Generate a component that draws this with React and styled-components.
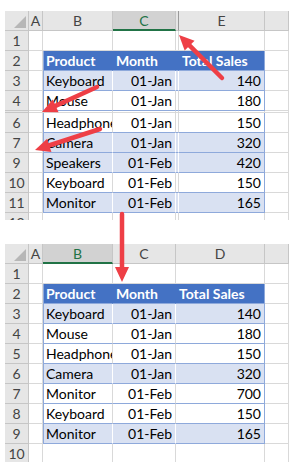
import React from 'react'
import styled, { createGlobalStyle } from 'styled-components'

// palette
const colors = {
	grid: '#d9d9d9',
	headerBg: '#e6e6e6',
	headerLine: '#c6c6c6',
	headerText: '#444444',
	selectedBg: '#d2d2d2',
	excelGreen: '#217346',
	tableHead: '#4472c4',
	tableBand: '#d9e1f2',
	tableLine: '#8ea9db',
	arrow: '#ee3f46',
}

const tones = {
	head: colors.tableHead,
	band: colors.tableBand,
	plain: '#ffffff',
}

// sheet data
const topSheet = {
	template: '24px 14px 70px 63px 3px 86px 1fr',
	height: 209,
	columns: [
		{ label: 'A' },
		{ label: 'B' },
		{ label: 'C', selected: true, align: 'right' },
		{ hidden: true },
		{ label: 'E', align: 'right' },
		{ label: '' },
	],
	table: [1, 4],
	rows: [
		{ n: '1' },
		{ n: '2', tone: 'head', cells: [null, 'Product', 'Month', null, 'Total Sales'] },
		{ n: '3', tone: 'band', cells: [null, 'Keyboard', '01-Jan', null, '140'] },
		{ n: '4', tone: 'plain', cells: [null, 'Mouse', '01-Jan', null, '180'] },
		{ hidden: true },
		{ n: '6', tone: 'plain', cells: [null, 'Headphones', '01-Jan', null, '150'] },
		{ n: '7', tone: 'band', cells: [null, 'Camera', '01-Jan', null, '320'] },
		{ n: '9', tone: 'band', cells: [null, 'Speakers', '01-Feb', null, '420'] },
		{ n: '10', tone: 'plain', cells: [null, 'Keyboard', '01-Feb', null, '150'] },
		{ n: '11', tone: 'band', cells: [null, 'Monitor', '01-Feb', null, '165'] },
		{ n: '12' },
	],
}

const bottomSheet = {
	template: '24px 14px 70px 63px 89px 1fr',
	height: 240,
	columns: [
		{ label: 'A' },
		{ label: 'B', selected: true },
		{ label: 'C', align: 'right' },
		{ label: 'D', align: 'right' },
		{ label: '' },
	],
	table: [1, 3],
	rows: [
		{ n: '1' },
		{ n: '2', tone: 'head', cells: [null, 'Product', 'Month', 'Total Sales'] },
		{ n: '3', tone: 'band', cells: [null, 'Keyboard', '01-Jan', '140'] },
		{ n: '4', tone: 'plain', cells: [null, 'Mouse', '01-Jan', '180'] },
		{ n: '5', tone: 'plain', cells: [null, 'Headphones', '01-Jan', '150'] },
		{ n: '6', tone: 'band', cells: [null, 'Camera', '01-Jan', '320'] },
		{ n: '7', tone: 'plain', cells: [null, 'Monitor', '01-Feb', '700'] },
		{ n: '8', tone: 'plain', cells: [null, 'Keyboard', '01-Feb', '150'] },
		{ n: '9', tone: 'band', cells: [null, 'Monitor', '01-Feb', '165'] },
		{ n: '10' },
	],
}

const arrows = [
	{ from: [222, 78], to: [179, 35] },
	{ from: [97, 87], to: [42, 112] },
	{ from: [100, 129], to: [35, 150] },
	{ from: [122, 214], to: [122, 282] },
]

const Arrow = ({ from, to }) => {
	const dx = to[0] - from[0]
	const dy = to[1] - from[1]
	const len = Math.hypot(dx, dy)
	const ux = dx / len
	const uy = dy / len
	const head = 15
	const half = 7
	const bx = to[0] - ux * head
	const by = to[1] - uy * head
	const points = [
		`${to[0]},${to[1]}`,
		`${bx - uy * half},${by + ux * half}`,
		`${bx + uy * half},${by - ux * half}`,
	].join(' ')

	return (
		<g>
			<line
				x1={from[0]}
				y1={from[1]}
				x2={bx + ux * 2}
				y2={by + uy * 2}
				stroke={colors.arrow}
				strokeWidth='4.5'
				strokeLinecap='round'
			/>
			<polygon points={points} fill={colors.arrow} />
		</g>
	)
}

const Sheet = ({ sheet }) => {
	const [tableStart, tableEnd] = sheet.table

	return (
		<SheetFrame $height={sheet.height}>
			<Row $template={sheet.template}>
				<Corner />
				{sheet.columns.map((col, i) => (
					<ColumnHead key={i} $selected={col.selected} $hidden={col.hidden}>
						{col.label}
					</ColumnHead>
				))}
			</Row>
			{sheet.rows.map((row, r) => {
				if (row.hidden) {
					return (
						<Row key={r} $template={sheet.template} $hidden>
							<RowHead />
							{sheet.columns.map((col, i) => (
								<Cell key={i} $hidden />
							))}
						</Row>
					)
				}

				return (
					<Row key={r} $template={sheet.template}>
						<RowHead>{row.n}</RowHead>
						{sheet.columns.map((col, i) => {
							const inTable = row.tone && i >= tableStart && i <= tableEnd
							const value = row.cells ? row.cells[i] : null

							return (
								<Cell
									key={i}
									$tone={inTable ? row.tone : null}
									$align={row.tone === 'head' ? 'left' : col.align}
									$leftEdge={inTable && i === tableStart}
									$rightEdge={inTable && i === tableEnd}
									$narrow={col.hidden}>
									{value}
								</Cell>
							)
						})}
					</Row>
				)
			})}
		</SheetFrame>
	)
}

const App = () => {
	return (
		<>
			<GlobalStyle />
			<Page>
				<Sheet sheet={topSheet} />
				<Sheet sheet={bottomSheet} />
				<Overlay width='289' height='462' viewBox='0 0 289 462'>
					{arrows.map((a, i) => (
						<Arrow key={i} from={a.from} to={a.to} />
					))}
				</Overlay>
			</Page>
		</>
	)
}

const GlobalStyle = createGlobalStyle`
	html, body {
		margin: 0;
		padding: 0;
		background: #ffffff;
		overflow: hidden;
	}

	body {
		font-family: Lato, 'Liberation Sans', sans-serif;
	}
`

const Page = styled.div`
	position: relative;
	width: 289px;
	height: 462px;
	overflow: hidden;
	padding-top: 11px;
	box-sizing: border-box;
	display: flex;
	flex-direction: column;
	gap: 24px;
`

const SheetFrame = styled.div`
	margin-left: 5px;
	height: ${(p) => p.$height}px;
	flex-shrink: 0;
	overflow: hidden;
`

const Row = styled.div`
	display: grid;
	grid-template-columns: ${(p) => p.$template};
	height: ${(p) => (p.$hidden ? 2 : 20)}px;
	font-size: 14px;
	line-height: 1;
`

const Corner = styled.div`
	position: relative;
	background: ${colors.headerBg};
	border-right: 1px solid ${colors.headerLine};
	border-bottom: 1px solid ${colors.headerLine};
	box-sizing: border-box;

	&::after {
		content: '';
		position: absolute;
		right: 2px;
		bottom: 2px;
		width: 12px;
		height: 12px;
		background: #b7b7b7;
		clip-path: polygon(100% 0, 100% 100%, 0 100%);
	}
`

const ColumnHead = styled.div`
	display: flex;
	align-items: center;
	justify-content: center;
	box-sizing: border-box;
	background: ${(p) => (p.$selected ? colors.selectedBg : colors.headerBg)};
	color: ${(p) => (p.$selected ? colors.excelGreen : colors.headerText)};
	border-right: 1px solid ${(p) => (p.$hidden ? '#9a9a9a' : colors.headerLine)};
	border-bottom: ${(p) =>
		p.$selected
			? `2px solid ${colors.excelGreen}`
			: `1px solid ${colors.headerLine}`};
	padding-top: 1px;
	overflow: hidden;
`

const RowHead = styled.div`
	display: flex;
	align-items: center;
	justify-content: center;
	box-sizing: border-box;
	background: ${colors.headerBg};
	color: ${colors.headerText};
	border-right: 1px solid ${colors.headerLine};
	border-bottom: 1px solid ${colors.headerLine};
	padding-top: 1px;
`

const Cell = styled.div`
	display: flex;
	align-items: center;
	justify-content: ${(p) => (p.$align === 'right' ? 'flex-end' : 'flex-start')};
	box-sizing: border-box;
	padding: ${(p) => (p.$narrow || p.$hidden ? '0' : '1px 3px 0')};
	white-space: nowrap;
	overflow: hidden;
	background: ${(p) => (p.$tone ? tones[p.$tone] : '#ffffff')};
	color: ${(p) => (p.$tone === 'head' ? '#ffffff' : '#000000')};
	font-weight: ${(p) => (p.$tone === 'head' ? 700 : 400)};
	border-right: 1px solid
		${(p) =>
			p.$rightEdge
				? colors.tableLine
				: p.$tone === 'head'
				? colors.tableHead
				: p.$tone === 'band'
				? '#ffffff'
				: colors.grid};
	border-bottom: 1px solid ${(p) => (p.$tone ? colors.tableLine : colors.grid)};
	box-shadow: ${(p) => (p.$leftEdge ? `inset 1px 0 ${colors.tableLine}` : 'none')};
`

const Overlay = styled.svg`
	position: absolute;
	left: 0;
	top: 0;
	pointer-events: none;
`

export default App
